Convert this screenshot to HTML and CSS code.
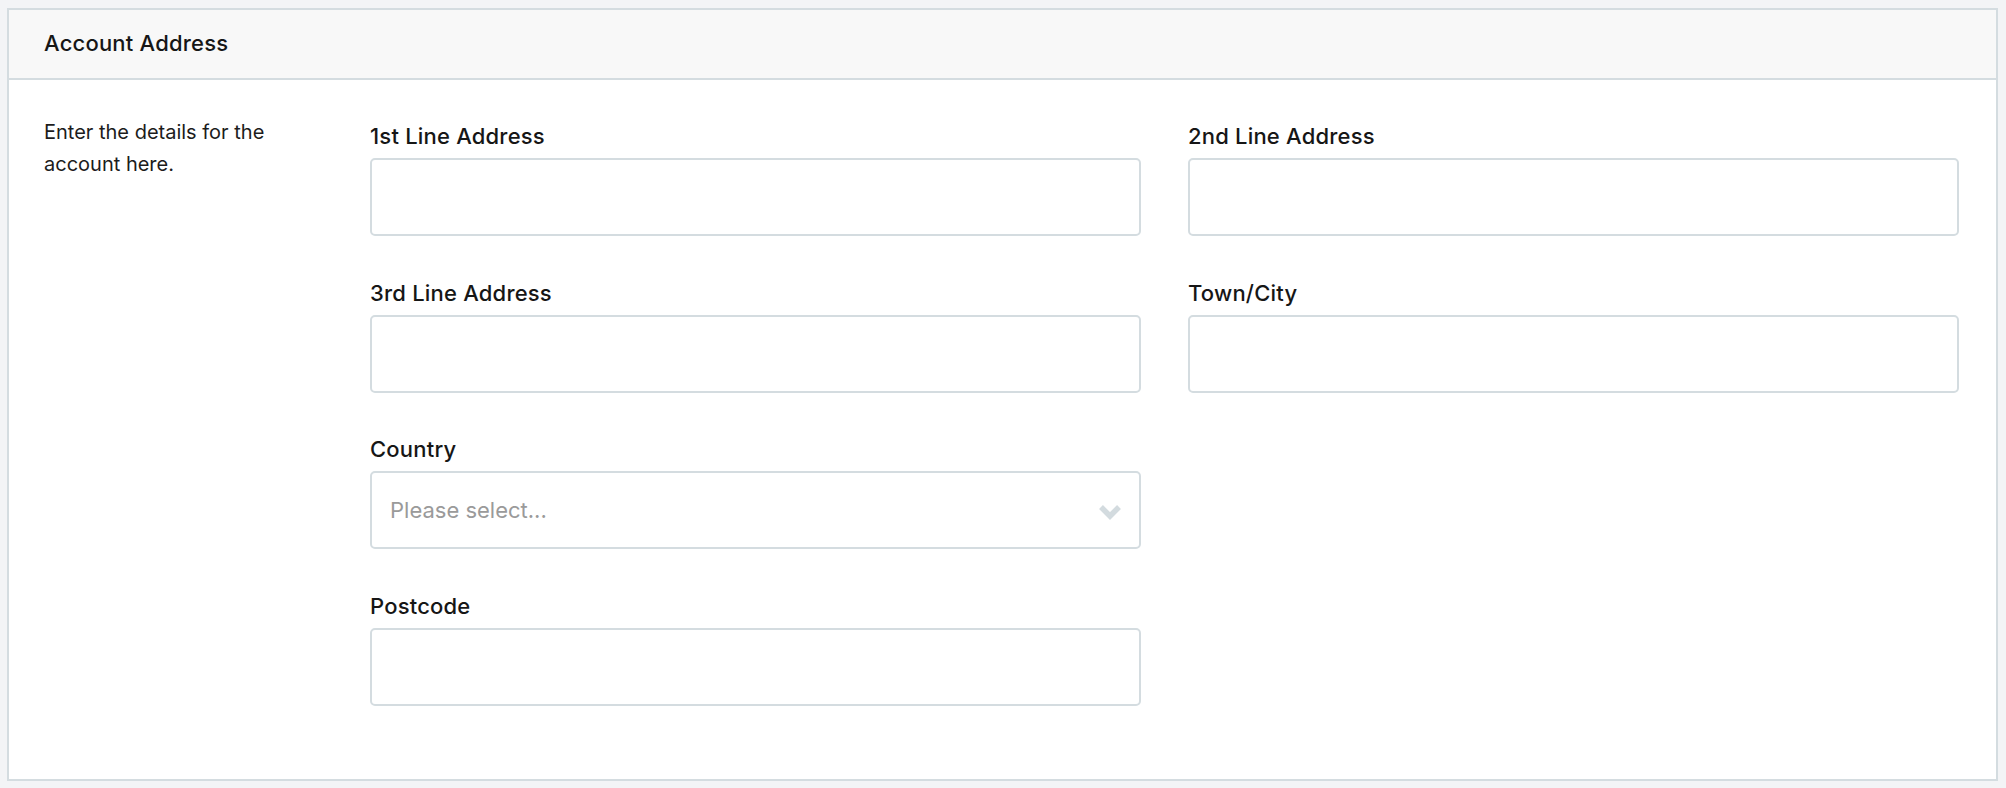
FILE: index.html
```html
<!DOCTYPE html>
<html lang="en">
<head>
    <meta charset="UTF-8">
    <meta name="viewport" content="width=device-width, initial-scale=1.0">
    <title>Account Address</title>
    <link rel="stylesheet" href="styles.css">
</head>
<body>
    <div class="panel">
        <div class="panel-header">Account Address</div>

        <div class="panel-body">
            <p class="panel-description">Enter the details for the account here.</p>

            <div class="form-grid">
                <div class="form-field">
                    <label class="form-label" for="line1">1st Line Address</label>
                    <input class="form-input" id="line1" type="text">
                </div>
                <div class="form-field">
                    <label class="form-label" for="line2">2nd Line Address</label>
                    <input class="form-input" id="line2" type="text">
                </div>
                <div class="form-field">
                    <label class="form-label" for="line3">3rd Line Address</label>
                    <input class="form-input" id="line3" type="text">
                </div>
                <div class="form-field">
                    <label class="form-label" for="town">Town/City</label>
                    <input class="form-input" id="town" type="text">
                </div>
                <div class="form-field form-field-left">
                    <label class="form-label" for="country">Country</label>
                    <div class="select-wrap">
                        <select class="form-input form-select" id="country">
                            <option value="">Please select...</option>
                        </select>
                        <svg class="select-chevron" width="24" height="18" viewBox="0 0 24 18">
                            <polyline points="3,4 12,13 21,4" fill="none" stroke="#d3dbdf" stroke-width="5.5"/>
                        </svg>
                    </div>
                </div>
                <div class="form-field form-field-left">
                    <label class="form-label" for="postcode">Postcode</label>
                    <input class="form-input" id="postcode" type="text">
                </div>
            </div>
        </div>
    </div>
</body>
</html>
```

FILE: styles.css
```css
body {
    font-family: 'Inter', 'Lato', sans-serif;
    margin: 0;
    padding: 8px 8px 8px 7px;
    background: #f3f4f6;
    color: #161616;
}

.panel {
    background: #ffffff;
    border: 2px solid #d4dce0;
}

.panel-header {
    height: 70px;
    padding: 0 35px 3px;
    box-sizing: border-box;
    line-height: 67px;
    font-size: 22px;
    font-weight: 500;
    letter-spacing: 0.2px;
    background: #f8f8f8;
    border-bottom: 2px solid #d4dce0;
}

.panel-body {
    display: grid;
    grid-template-columns: 291px 1fr;
    column-gap: 35px;
    padding: 35px 37px 73px 35px;
}

.panel-description {
    margin: 1px 0 0;
    max-width: 260px;
    font-size: 20px;
    line-height: 32px;
    color: #1c1c1c;
}

.form-grid {
    display: grid;
    grid-template-columns: 1fr 1fr;
    column-gap: 47px;
    row-gap: 41.5px;
    margin-top: 6px;
}

.form-field {
    display: flex;
    flex-direction: column;
}

.form-field-left {
    grid-column: 1;
}

.form-label {
    font-size: 22px;
    font-weight: 500;
    letter-spacing: 0.2px;
    line-height: 30px;
    margin-bottom: 7px;
}

.form-input {
    height: 78px;
    box-sizing: border-box;
    border: 2px solid #d4dce0;
    border-radius: 5px;
    background: #ffffff;
    padding: 0 18px;
    font-family: inherit;
    font-size: 22px;
    color: #161616;
}

.select-wrap {
    position: relative;
}

.form-select {
    width: 100%;
    appearance: none;
    -webkit-appearance: none;
    color: #9a9a9a;
}

.select-chevron {
    position: absolute;
    right: 19px;
    top: 32px;
    pointer-events: none;
}
```
